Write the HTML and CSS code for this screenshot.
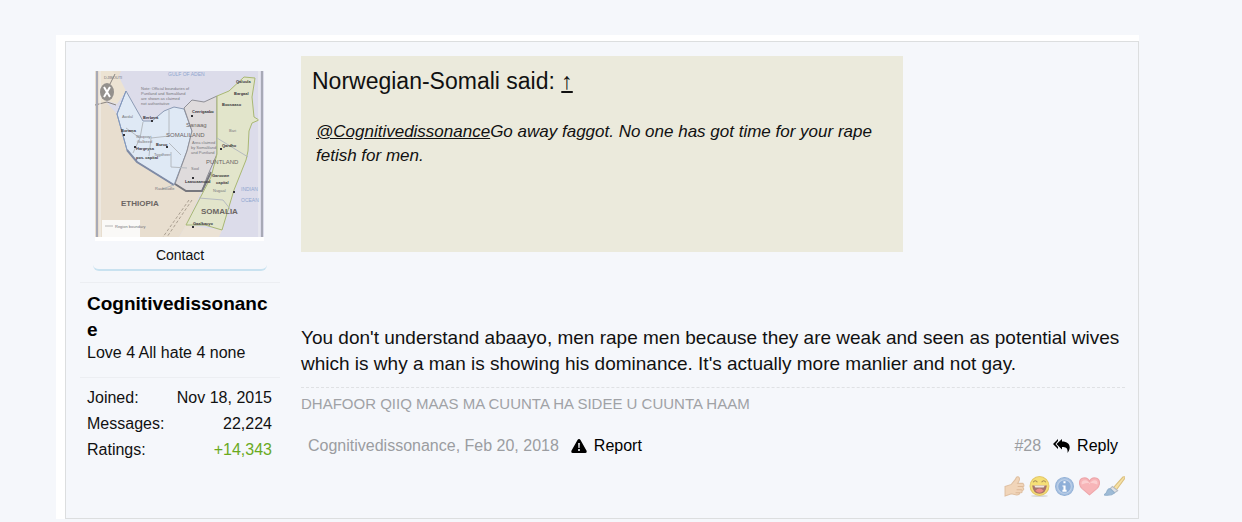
FILE: index.html
```
<!DOCTYPE html>
<html lang="en">
<head>
  <meta charset="UTF-8">
  <meta name="viewport" content="width=device-width, initial-scale=1">
  <title>Thread - Post #28</title>
  <link rel="stylesheet" href="styles.css">
</head>
<body>
  <div class="thread">
    <article class="post">
      <aside class="user">
        <div class="avatar-block">
          <svg class="avatar" viewBox="0 0 169 166" role="img" aria-label="Map of Somalia">
            <rect width="169" height="166" fill="#dcdcea"/>
            <path d="M0 0H26L20 14L11 31L22 43L32 79L42 91L79 114L91 119H107L91 154L84 166H0Z" fill="#e8decf"/>
            <path d="M91 154L127 159L124 166H84Z" fill="#ebe2d5"/>
            <path d="M4 32L12 30L22 33L31 20L25 8L17 0H6Z" fill="#ece3d3"/>
            <path d="M0 34L12 31L21 34M10 23L20 3" fill="none" stroke="#8b8580"/>
            <path d="M31 20L48 50H57L69 40L79 36L89 38L97 60L92 80L79 114L42 91L32 79L22 43Z" fill="#dfe9f5" stroke="#8c9bb5"/>
            <path d="M32 79L22 43L31 20" fill="none" stroke="#8098bf"/>
            <path d="M32 79L42 91L79 114" fill="none" stroke="#7f8ba6" stroke-width="2"/>
            <path d="M89 37L97 29L109 31L122 25V83L112 106L107 120H91L80 113L92 80L97 60Z" fill="#dfdbdc" stroke="#8f8f96"/>
            <path d="M80 113L91 120H107L116 101" fill="none" stroke="#77777d" stroke-width="2"/>
            <path d="M122 25L134 20L149 6L160 7L157 26L159 46L164 49L157 52L154 60L153 80L151 89L139 119L127 159L110 154L91 154L116 106L122 83Z" fill="#e2e5cb" stroke="#a9b873"/>
            <path d="M31 57L45 67L48 51M45 67L38 82M74 39V65L56 67L54 85M74 72L86 84M92 97L76 96V81M122 67L153 86M104 127L128 129L136 139M79 114L67 118" fill="none" stroke="#b5bac0"/>
            <path d="M97 129L72 166M94 129L68 166" fill="none" stroke="#aa9f91" stroke-dasharray="3 2"/>
            <path d="M2 0V166M167 0V166" stroke="#a7a9b6" stroke-width="2"/>
            <path d="M5 0V166M164 0V166" stroke="#f1f1f2"/>
            <rect x="7" y="149" width="38" height="17" fill="#faf9f7"/>
            <path d="M10 155H18" stroke="#b8b8b8"/>
            <ellipse cx="12" cy="21" rx="7" ry="9" fill="#94918d"/>
            <path d="M9 16L15 26M15 16L9 26" stroke="#fff" stroke-width="2"/>
            <g class="map-note">
              <text x="9" y="8">DJIBOUTI</text>
              <text x="46" y="19">Note: Official boundaries of</text>
              <text x="46" y="24">Puntland and Somaliland</text>
              <text x="46" y="29">are shown as claimed</text>
              <text x="46" y="34">not authoritative</text>
              <text x="27" y="47">Awdal</text>
              <text x="41" y="67">Woqooyi</text>
              <text x="42" y="72">Galbeed</text>
              <text x="59" y="85">Togdheer</text>
              <text x="96" y="99">Sool</text>
              <text x="97" y="73">Area claimed</text>
              <text x="96" y="78">by Somaliland</text>
              <text x="96" y="83">and Puntland</text>
              <text x="134" y="61">Bari</text>
              <text x="118" y="121">Nugaal</text>
              <text x="20" y="157">Region boundary</text>
              <text x="60" y="119">Rauboudle</text>
            </g>
            <g class="map-town">
              <text x="48" y="48">Berbera</text>
              <text x="26" y="61">Borama</text>
              <text x="41" y="79">Hargeysa</text>
              <text x="41" y="88">pos. capital</text>
              <text x="61" y="75">Burco</text>
              <text x="97" y="42">Ceerigaabo</text>
              <text x="127" y="35">Boosaaso</text>
              <text x="141" y="12">Qaluula</text>
              <text x="139" y="24">Bargaal</text>
              <text x="127" y="76">Qardho</text>
              <text x="90" y="112">Laascaanood</text>
              <text x="117" y="106">Garoowe</text>
              <text x="121" y="113">capital</text>
              <text x="98" y="154">Gaalkacyo</text>
              <path d="M56 49h2v2h-2zM28 63h2v2h-2zM39 75h2v2h-2zM71 75h2v2h-2zM96 44h2v2h-2zM125 77h2v2h-2zM138 120h2v2h-2zM97 155h2v2h-2zM97 106h2v2h-2z"/>
            </g>
            <g class="map-region">
              <text x="26" y="135">ETHIOPIA</text>
              <text x="106" y="143">SOMALIA</text>
              <text class="map-region-small" x="71" y="66">SOMALILAND</text>
              <text class="map-region-small" x="111" y="93">PUNTLAND</text>
              <text class="map-region-small" x="91" y="56">Sanaag</text>
            </g>
            <g class="map-sea">
              <text x="73" y="5">GULF OF ADEN</text>
              <text x="146" y="120">INDIAN</text>
              <text x="146" y="131">OCEAN</text>
            </g>
          </svg>
          <a class="contact" href="#">Contact</a>
        </div>
        <div class="user-text">
          <h3 class="username">Cognitivedissonance</h3>
          <p class="user-title">Love 4 All hate 4 none</p>
        </div>
        <dl class="stats">
          <div><dt>Joined:</dt><dd>Nov 18, 2015</dd></div>
          <div><dt>Messages:</dt><dd>22,224</dd></div>
          <div><dt>Ratings:</dt><dd class="positive">+14,343</dd></div>
        </dl>
      </aside>

      <div class="content">
        <blockquote class="quote">
          <div class="quote-head">Norwegian-Somali said: <a href="#">↑</a></div>
          <p class="quote-text"><a href="#">@Cognitivedissonance</a>Go away faggot. No one has got time for your rape fetish for men.</p>
        </blockquote>
        <p class="message">You don't understand abaayo, men rape men because they are weak and seen as potential wives which is why a man is showing his dominance. It's actually more manlier and not gay.</p>
        <div class="signature">DHAFOOR QIIQ MAAS MA CUUNTA HA SIDEE U CUUNTA HAAM</div>
        <div class="meta">
          <span class="muted">Cognitivedissonance, Feb 20, 2018</span>
          <a class="control" href="#">
            <svg width="16" height="14" viewBox="0 0 16 14"><path d="M8 0Q9 0 9.500 1L15.700 12Q16 14 14.500 14H1.500Q0 14 .3 12L6.500 1Q7 0 8 0Z"/><path d="M7 4H9L8.700 9H7.300ZM7 10H9V12H7Z" fill="#c9cbce"/></svg>
            Report
          </a>
          <a class="muted number" href="#">#28</a>
          <a class="control" href="#">
            <svg width="17" height="14" viewBox="0 0 17 14"><path d="M5 0V2L2.500 5L5 8V10L0 5Z"/><path d="M9 0V2.500C15 2.500 17.500 6 16.500 10Q16 12 14.500 14C15 9.500 13.500 8 9 8V10.500L3.500 5Z"/></svg>
            Reply
          </a>
        </div>
        <div class="ratings">
          <button type="button" aria-label="Like">
            <svg viewBox="0 0 20 20"><path d="M1 10L7 8L11 3Q12 0 14 1Q16 3 13 7H18Q20 9 18 11Q20 13 17 14Q18 16 15 16Q15 18 12 18L7 17L1 19Z" fill="#f1d5b9" stroke="#dfc0a2"/><path d="M13 10H18M12 13H17M11 16H15" fill="none" stroke="#ddb998"/></svg>
          </button>
          <button type="button" aria-label="Funny">
            <svg viewBox="0 0 20 20"><ellipse cx="10" cy="19" rx="8" ry="1" fill="#d9d9d8"/><circle cx="10" cy="9.500" r="9" fill="#f5df76" stroke="#e3c86b"/><path d="M3 9H17Q16 17 10 17Q4 17 3 9Z" fill="#a8756b"/><path d="M5 9H15L14 11H6Z" fill="#eee6df"/><path d="M6 14Q10 10 14 14Q10 18 6 14Z" fill="#ec8d89"/><path d="M4 6Q6 3 8 6M12 6Q14 3 16 6" fill="none" stroke="#a58b58"/></svg>
          </button>
          <button type="button" aria-label="Informative">
            <svg viewBox="0 0 20 20"><circle cx="10" cy="10" r="8.500" fill="#a8c2e2" stroke="#93b1d6"/><circle cx="10" cy="10" r="6.500" fill="#8eafd8" stroke="#bfd1e8"/><path d="M9 5H11V7H9ZM8 9H11V13H12V15H8V13H9V10H8Z" fill="#fff"/></svg>
          </button>
          <button type="button" aria-label="Love">
            <svg viewBox="0 0 20 20"><path d="M10 18L3 12C-1 8 0 3 4 2Q8 1 10 5Q12 1 16 2C20 3 21 8 17 12Z" fill="#f7b5b8" stroke="#eda7ab"/><path d="M2.500 8Q2 4 6 4Q9 4 10 8Q12 4 15 4Q18 4 17.500 8Q10 5 2.500 8Z" fill="#fbcfd0"/></svg>
          </button>
          <button type="button" aria-label="Creative">
            <svg viewBox="0 0 20 20"><path d="M9 11L18 1Q20 0 20 2L12 13Z" fill="#f6e1a5" stroke="#dbc080"/><path d="M8 10L13 14L10 16L6 12Z" fill="#e0e2e5" stroke="#b5bcc5"/><path d="M6 12L10 16Q7 19 0 18Q3 16 3 14Q4 12 6 12Z" fill="#9ebbd6" stroke="#93b1cd"/></svg>
          </button>
        </div>
      </div>
    </article>
  </div>
</body>
</html>
```
FILE: styles.css
```
* {
  box-sizing: border-box;
}

body {
  margin: 0;
  padding: 35px 103px 0 56px;
  background: #f5f7fb;
  color: #111;
  font-family: "Liberation Sans", Arial, sans-serif;
  font-size: 16px;
}

h3, p, dl, dd, blockquote {
  margin: 0;
}

a {
  color: inherit;
}

.thread {
  padding: 6px 0 0 9px;
  background: #fff;
}

.post {
  display: grid;
  grid-template-columns: 200px minmax(0, 1fr);
  gap: 21px;
  padding: 14px 13px 21px 14px;
  background: #f5f7fb;
  border: 1px solid #dcdedf;
}

/* user column */
.user {
  padding-top: 15px;
}

.avatar-block {
  width: 174px;
  margin: 0 auto;
}

.avatar {
  display: block;
  width: 169px;
  height: 166px;
  margin-left: 2px;
  box-sizing: content-box;
  border-bottom: 4px solid #fff;
}

.contact {
  display: block;
  border-bottom: 2px solid #c9e2f0;
  border-radius: 6px;
  font-size: 14px;
  line-height: 28px;
  text-align: center;
  text-decoration: none;
}

.user-text {
  margin-top: 11px;
  padding: 8px 7px 14px;
  border-top: 1px solid #eceef2;
  border-bottom: 1px solid #eceef2;
}

.username {
  font-size: 19px;
  line-height: 26px;
  color: #000;
  overflow-wrap: anywhere;
}

.user-title {
  line-height: 20px;
}

.stats {
  padding: 7px 8px 7px 7px;
  line-height: 26px;
}

.stats div {
  display: flex;
  justify-content: space-between;
}

.positive {
  color: #6aaa1e;
}

.map-note {
  font-size: 4px;
  fill: #77777c;
}

.map-town {
  font-size: 4px;
  font-weight: bold;
  fill: #333338;
}

.map-region {
  font-size: 8px;
  font-weight: bold;
  fill: #6b6563;
}

.map-region-small {
  font-size: 6px;
  font-weight: normal;
}

.map-sea {
  font-size: 5px;
  fill: #8fa6cf;
}

/* message column */
.quote {
  width: 73%;
  min-height: 196px;
  padding: 11px;
  background: #ebeadc;
}

.quote-head {
  font-size: 23px;
  line-height: 28px;
}

.quote-text {
  padding: 25px 4px 0;
  font-size: 17px;
  font-style: italic;
  line-height: 24px;
}

.message {
  margin-top: 73px;
  font-size: 19px;
  line-height: 26px;
}

.signature {
  margin-top: 10px;
  padding-top: 7px;
  border-top: 1px dashed #dfe1e4;
  color: #a0a2a6;
  font-size: 15px;
  line-height: 18px;
}

.meta {
  display: flex;
  align-items: center;
  gap: 12px;
  margin-top: 23px;
  padding: 0 7px;
  line-height: 20px;
}

.muted {
  color: #9b9da1;
  text-decoration: none;
}

.number {
  margin-left: auto;
}

.control {
  display: flex;
  align-items: center;
  gap: 7px;
  color: #000;
  text-decoration: none;
}

.ratings {
  display: flex;
  justify-content: flex-end;
  gap: 4px;
  margin-top: 20px;
}

.ratings button {
  width: 21px;
  height: 21px;
  padding: 0;
  border: 0;
  background: none;
  cursor: pointer;
}

.ratings svg {
  display: block;
}
```
